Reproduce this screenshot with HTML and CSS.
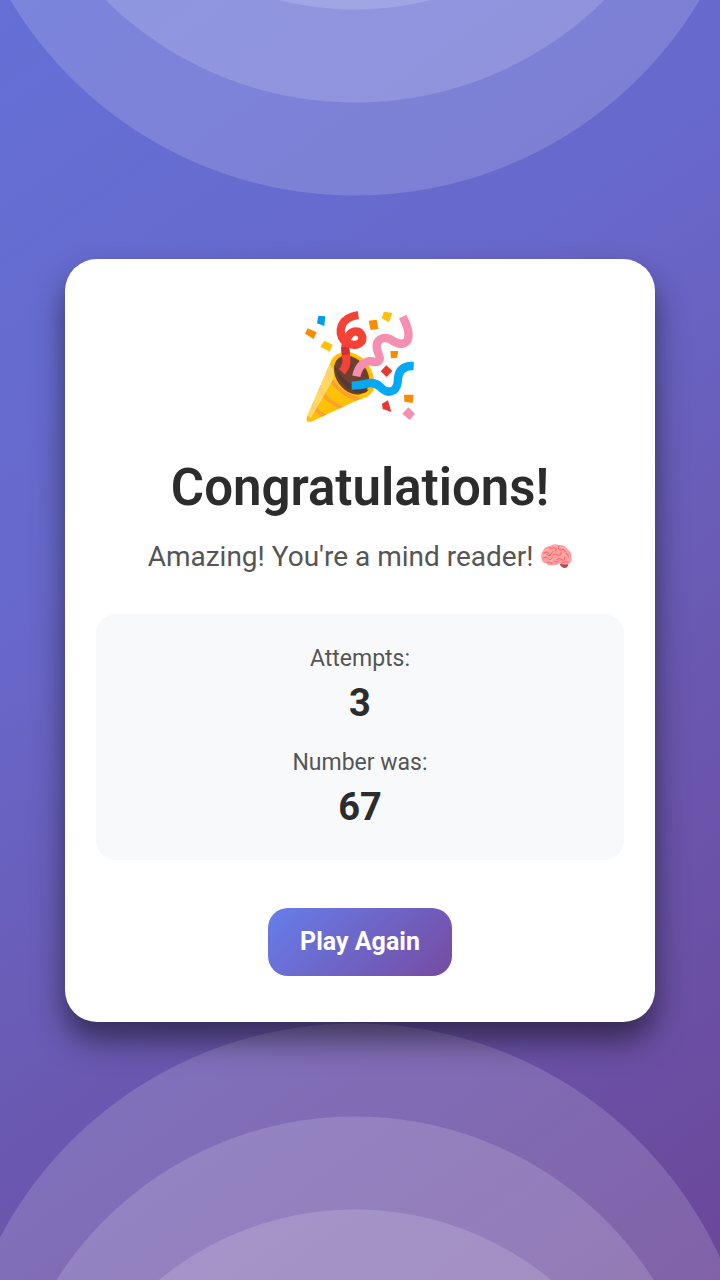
FILE: index.html
```html
<!DOCTYPE html>
<html lang="en">
<head>
<meta charset="utf-8">
<meta name="viewport" content="width=device-width, initial-scale=1">
<title>Congratulations!</title>
<link rel="stylesheet" href="styles.css">
</head>
<body class="page">
<main class="card">
  <svg class="popper" viewBox="0 0 390 390" role="img" aria-label="Party popper">
    <defs>
      <clipPath id="cone"><path d="M112 172 Q130 149 164 153 Q210 164 229 206 Q248 255 229 277 Q219 290 187 298 L52 361 Q29 368 36 347 Z"/></clipPath>
    </defs>
    <path fill="#ffc107" d="M112 172 Q130 149 164 153 Q210 164 229 206 Q248 255 229 277 Q219 290 187 298 L52 361 Q29 368 36 347 Z"/>
    <g clip-path="url(#cone)" fill="none">
      <path stroke="#ffa02c" stroke-width="12" d="M94 205 Q110 268 192 297 M72 254 Q88 300 145 322 M50 304 Q62 334 92 346"/>
      <path fill="#ffe082" fill-opacity=".75" d="M103 189 Q126 213 111 242 L48 350 L37 344 Z"/>
    </g>
    <ellipse cx="172" cy="221" rx="48" ry="67" transform="rotate(-36 172 221)" fill="#ffb300"/>
    <ellipse cx="170" cy="222" rx="46" ry="64" transform="rotate(-36 170 222)" fill="#6d4030"/>
    <path fill="#57382f" d="M117 190 Q132 255 183 274 Q209 282 221 266 Q181 265 155 240 Q130 218 117 190Z"/>
    <g fill="none" stroke-width="25" stroke-linejoin="round">
      <path stroke="#f44336" stroke-width="24" d="M141 212 Q157 195 154 172 Q152 160 150 136"/>
      <path stroke="#d32f2f" stroke-width="24" d="M153 162 L150 136"/>
      <path stroke="#f44336" d="M190 42 Q151 48 141 72 Q131 98 147 118 Q163 134 184 131 Q204 126 202 108 Q197 90 181 91 Q158 92 151 138"/>
      <path stroke="#f48fb1" d="M184 226 Q188 203 202 190 Q220 176 239 183 Q263 184 249 155 Q239 126 255 115 Q274 105 296 121 Q322 137 337 119 Q349 96 323 47"/>
      <path stroke="#03a9f4" d="M170 254 Q196 254 219 247 Q240 243 256 258 Q276 280 297 267 Q309 257 309 231 Q314 193 356 195"/>
    </g>
    <path fill="#039be5" d="M70 44 L91 46 L88 75 L66 67Z"/>
    <g fill="#fb8c00">
      <path d="M38 82 L65 94 L56 114 L30 98Z M221 59 L245 56 L250 84 L227 87Z M286 150 L310 150 L306 171 L288 172Z M327 281 L356 281 L353 306 L328 302Z"/>
    </g>
    <path fill="#ffc107" d="M267 32 L292 36 L282 64 L260 52Z M88 119 L113 131 L104 152 L76 137Z"/>
    <path fill="#e53935" d="M274 193 L292 210 L275 228 L257 211Z M279 298 L289 333 L263 324 L261 308Z"/>
    <path fill="#f48fb1" d="M340 319 L360 338 L344 357 L322 338Z"/>
  </svg>
  <h1 class="title">Congratulations!</h1>
  <p class="message">Amazing! You're a mind reader!
    <svg class="brain" viewBox="30 20 96 84" role="img" aria-label="Brain">
      <path fill="#b9474e" d="M89 86 L114 82 Q117 93 106 98 Q95 99 89 86Z"/>
      <path fill="#ff9e9e" d="M34 67 Q32 55 40 45 Q46 33 60 32 Q73 24 86 29 Q104 27 113 42 Q125 51 124 66 Q128 80 115 86 Q99 90 90 84 Q82 92 70 88 Q54 94 49 84 Q35 83 34 67Z"/>
      <g fill="none" stroke="#e96870" stroke-width="3" stroke-linecap="round">
        <path d="M41 53 Q50 46 56 54 T68 49 M58 37 Q65 43 73 37 Q81 37 78 47 M86 32 Q82 45 94 44 Q102 37 105 49 M40 68 Q50 61 55 70 Q61 77 67 67 M51 81 Q61 77 66 85 M68 59 Q76 52 84 60 Q96 61 93 50 M81 72 Q90 65 96 74 Q105 78 104 66 M109 54 Q117 56 115 66 M74 78 Q78 84 85 78 M96 83 Q105 77 114 80 M62 60 Q57 64 51 58"/>
      </g>
      <g fill="none" stroke="#ffc2bd" stroke-width="2" stroke-linecap="round">
        <path d="M44 47 Q50 39 57 43 M72 31 Q79 29 82 34 M94 35 Q103 35 107 42 M40 62 Q45 57 49 62 M72 64 Q78 61 81 66 M99 58 Q106 57 109 63 M58 77 Q62 72 67 76 M112 73 Q118 71 119 75"/>
      </g>
    </svg>
  </p>
  <dl class="stats">
    <div class="stat">
      <dt class="stat-label">Attempts:</dt>
      <dd class="stat-value">3</dd>
    </div>
    <div class="stat">
      <dt class="stat-label">Number was:</dt>
      <dd class="stat-value">67</dd>
    </div>
  </dl>
  <button class="play" type="button">Play Again</button>
</main>
</body>
</html>
```
FILE: styles.css
```css
* {
  box-sizing: border-box;
}

.page {
  --ring: rgba(255, 255, 255, 0.15);
  --x: calc(50% - 5px);
  margin: 0;
  min-height: 100vh;
  padding: 32px 9%;
  display: flex;
  align-items: center;
  justify-content: center;
  font-family: Roboto, "Liberation Sans", sans-serif;
  color: #2c2c2c;
  background:
    radial-gradient(circle at var(--x) -206px, var(--ring) 401px, transparent 402px),
    radial-gradient(circle at var(--x) -252px, var(--ring) 354px, transparent 355px),
    radial-gradient(circle at var(--x) -298px, var(--ring) 307px, transparent 308px),
    radial-gradient(circle at var(--x) calc(100% + 145px), var(--ring) 401px, transparent 402px),
    radial-gradient(circle at var(--x) calc(100% + 191px), var(--ring) 354px, transparent 355px),
    radial-gradient(circle at var(--x) calc(100% + 237px), var(--ring) 307px, transparent 308px),
    linear-gradient(145deg, #6470d6 0%, #6868cb 35%, #6a58b0 65%, #6b4799 100%);
}

.card {
  width: 100%;
  max-width: 640px;
  padding: 42px 31px 46px;
  display: flex;
  flex-direction: column;
  align-items: center;
  text-align: center;
  background: #fff;
  border-radius: 32px;
  box-shadow: 0 18px 30px rgba(0, 0, 0, 0.5);
}

.popper {
  width: 130px;
  height: 130px;
}

.title {
  margin: 26px 0 20px;
  font-size: 51px;
  line-height: 62px;
  font-weight: 600;
}

.message {
  margin: 0 0 39px;
  font-size: 28px;
  line-height: 36px;
  color: #555;
}

.brain {
  width: 32px;
  height: 28px;
  vertical-align: -4px;
}

.stats {
  width: 100%;
  margin: 0 0 48px;
  padding: 31px 24px 30px;
  display: flex;
  flex-direction: column;
  gap: 23px;
  background: #f8f9fb;
  border-radius: 20px;
}

.stat {
  display: flex;
  flex-direction: column;
  gap: 7px;
}

.stat-label {
  font-size: 23px;
  line-height: 28px;
  color: #555;
}

.stat-value {
  margin: 0;
  font-size: 38px;
  line-height: 46px;
  font-weight: 700;
}

.play {
  padding: 19px 32px;
  border: 0;
  border-radius: 20px;
  font: 700 25px/30px Roboto, "Liberation Sans", sans-serif;
  color: #fff;
  background: linear-gradient(135deg, #667eea, #764ba2);
  cursor: pointer;
}
```
